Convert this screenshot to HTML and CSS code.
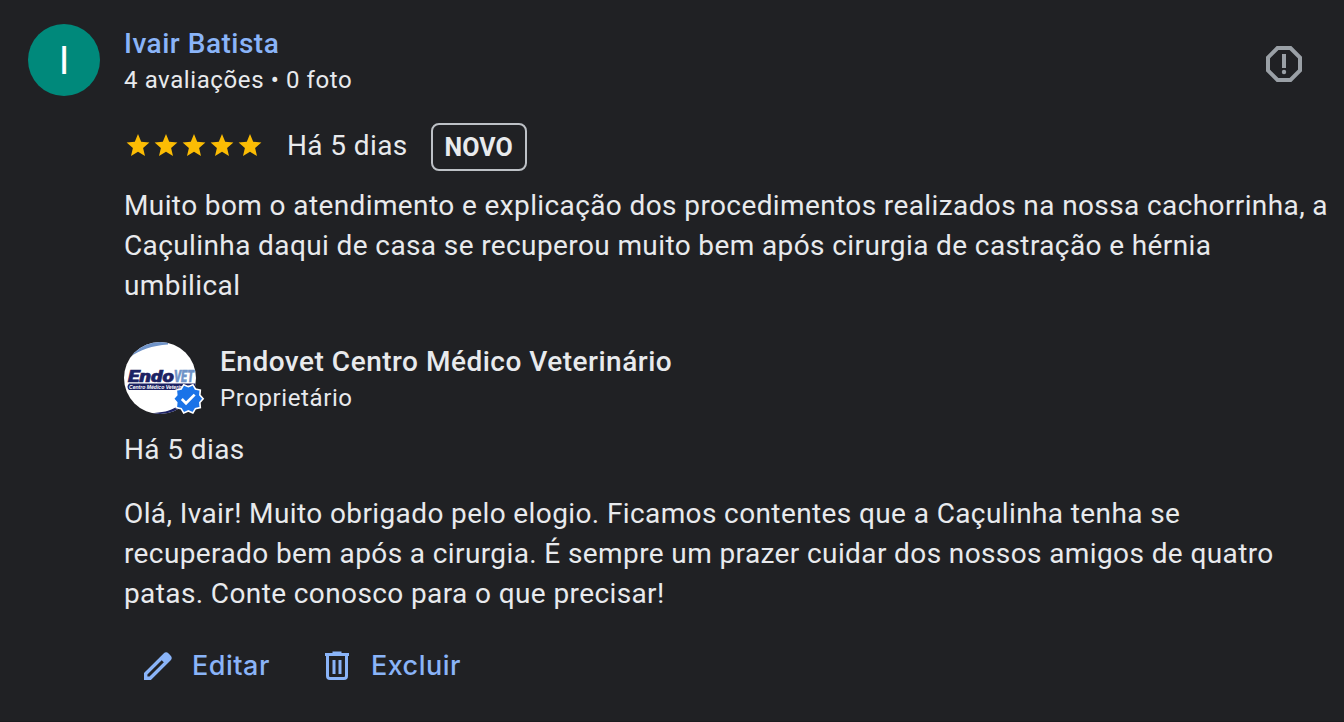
FILE: index.html
```html
<!DOCTYPE html>
<html lang="pt-BR">
<head>
    <meta charset="UTF-8">
    <meta name="viewport" content="width=device-width, initial-scale=1.0">
    <title>Avaliações</title>
    <link rel="stylesheet" href="styles.css">
</head>
<body>

    <div class="review">
        <div class="avatar">I</div>

        <div class="content">
            <!-- Reviewer -->
            <div class="header">
                <div>
                    <a class="name link">Ivair Batista</a>
                    <div class="subtitle">4 avaliações • 0 foto</div>
                </div>
                <svg class="report" viewBox="0 0 36 36">
                    <path d="M11.500 2h13L34 11.500v13L24.500 34h-13L2 24.500v-13z" fill="none" stroke="#9aa0a6" stroke-width="4"/>
                    <path d="M16 8h4v14h-4z" fill="#9aa0a6"/>
                    <circle cx="18" cy="26" r="2.200" fill="#9aa0a6"/>
                </svg>
            </div>

            <!-- Rating -->
            <div class="rating">
                <svg class="stars" viewBox="0 0 140 28">
                    <defs>
                        <path id="star" d="M14 20.700l7 4.300-1.900-8.100 6.300-5.500-8.200-.7L14 3l-3.200 7.700-8.200.7 6.300 5.500L7 25z"/>
                    </defs>
                    <g fill="#fbbc04">
                        <use href="#star"/>
                        <use href="#star" x="28"/>
                        <use href="#star" x="56"/>
                        <use href="#star" x="84"/>
                        <use href="#star" x="112"/>
                    </g>
                </svg>
                <span class="date">Há 5 dias</span>
                <span class="badge">NOVO</span>
            </div>

            <p class="text">Muito bom o atendimento e explicação dos procedimentos realizados na nossa cachorrinha, a Caçulinha daqui de casa se recuperou muito bem após cirurgia de castração e hérnia umbilical</p>

            <!-- Owner reply -->
            <div class="owner">
                <svg class="logo" viewBox="0 0 80 72">
                    <defs>
                        <clipPath id="round"><circle cx="36" cy="36" r="36"/></clipPath>
                    </defs>
                    <g clip-path="url(#round)">
                        <path d="M0 0h72v72H0z" fill="#fff"/>
                        <path d="M6 15C16 8 28 3.500 44 2.500V-2H6z" fill="#6f93c8"/>
                        <path d="M26 71C38 71 46 69 54 64L60 74H26z" fill="#1c2263"/>
                        <text class="logo-name" x="4" y="40" textLength="46" lengthAdjust="spacingAndGlyphs" fill="#1c2263" stroke="#1c2263" stroke-width=".6">Endo</text>
                        <text class="logo-name" x="50" y="40" textLength="20" lengthAdjust="spacingAndGlyphs" fill="#6f93c8" stroke="#6f93c8" stroke-width=".6">VET</text>
                        <path d="M5 41.500h67v6.500H5q-3-3.200 0-6.500z" fill="#1c2263"/>
                        <text class="logo-tag" x="5" y="46.700" textLength="63" lengthAdjust="spacingAndGlyphs" fill="#fff">Centro Médico Veterinário</text>
                    </g>
                    <g transform="translate(48.100 40.600) scale(1.350)">
                        <path d="M23 12l-2.440-2.780.34-3.680-3.610-.82-1.890-3.180L12 3 8.600 1.540 6.710 4.720l-3.610.81.34 3.680L1 12l2.440 2.780-.34 3.690 3.610.82 1.890 3.180L12 21l3.400 1.460 1.890-3.180 3.610-.82-.34-3.680L23 12z" fill="#1a73e8" stroke="#fff" stroke-width="1.200"/>
                        <path d="M7.200 12.200l3.100 3.100 6.400-6.400" fill="none" stroke="#fff" stroke-width="2"/>
                    </g>
                </svg>
                <div>
                    <div class="name">Endovet Centro Médico Veterinário</div>
                    <div class="subtitle">Proprietário</div>
                </div>
            </div>
            <div class="date">Há 5 dias</div>
            <p class="text reply">Olá, Ivair! Muito obrigado pelo elogio. Ficamos contentes que a Caçulinha tenha se recuperado bem após a cirurgia. É sempre um prazer cuidar dos nossos amigos de quatro patas. Conte conosco para o que precisar!</p>

            <div class="actions">
                <button>
                    <svg class="icon" viewBox="0 0 36 36">
                        <path d="M5.700 30.300v-4.500L24.800 6.700q1.300-1.300 2.600 0l1.900 1.900q1.300 1.300 0 2.600L10.200 30.300z" fill="none" stroke="#8ab4f8" stroke-width="3.400"/>
                        <path d="M20 10.500l5-5 5.500 5.500-5 5z" fill="#8ab4f8"/>
                    </svg>
                    Editar
                </button>
                <button>
                    <svg class="icon" viewBox="0 0 36 36" fill="none" stroke="#8ab4f8">
                        <path d="M6 6.500h24M13.500 5h9" stroke-width="3"/>
                        <path d="M8.500 8v20q0 2.500 2.500 2.500h14q2.500 0 2.500-2.500V8" stroke-width="3"/>
                        <path d="M15 12v14M21 12v14" stroke-width="3"/>
                    </svg>
                    Excluir
                </button>
            </div>
        </div>
    </div>

</body>
</html>
```
FILE: styles.css
```css
body {
    font-family: Roboto, sans-serif;
    background-color: #202124;
    color: #e8eaed;
    margin: 0;
}

.review {
    display: flex;
    gap: 24px;
    box-sizing: border-box;
    height: 722px;
    padding: 24px 14px 0 28px;
    border-bottom: 1px solid #1b1c1f;
}

.avatar {
    flex: none;
    box-sizing: border-box;
    width: 72px;
    height: 72px;
    padding-top: 1px;
    border-radius: 50%;
    background: #00897b;
    color: white;
    font-size: 39px;
    line-height: 72px;
    text-align: center;
}

.content {
    flex: 1;
}

.header {
    display: flex;
    justify-content: space-between;
}

.name {
    display: block;
    font-size: 28px;
    font-weight: 500;
    line-height: 40px;
    letter-spacing: 0.5px;
}

.link {
    color: #8ab4f8;
}

.subtitle {
    font-size: 24px;
    line-height: 32px;
    letter-spacing: 0.6px;
}

.report {
    width: 36px;
    height: 36px;
    margin: 22px 28px 0 0;
}

.rating {
    display: flex;
    align-items: center;
    height: 48px;
    margin-top: 27px;
}

.stars {
    width: 140px;
    height: 28px;
    margin: 0 23px 5px 0;
}

.date, .text {
    font-size: 28px;
    line-height: 40px;
    letter-spacing: 0.39px;
}

.rating .date {
    margin-bottom: 2px;
}

.badge {
    box-sizing: border-box;
    width: 96px;
    height: 48px;
    margin-left: 23px;
    border: 2px solid #bdc1c6;
    border-radius: 8px;
    font-size: 25px;
    font-weight: 700;
    line-height: 46px;
    text-align: center;
}

.text {
    margin: 15px 0 36px;
}

.owner {
    display: flex;
    gap: 16px;
    margin-bottom: 16px;
}

.logo {
    width: 80px;
    height: 72px;
    overflow: visible;
}

.logo-name {
    font: italic 900 17px Roboto, sans-serif;
}

.logo-tag {
    font: italic 700 5.5px "Liberation Sans", sans-serif;
}

.reply {
    margin: 24px 0 32px;
}

.actions {
    display: flex;
    gap: 49px;
    padding-left: 16px;
}

button {
    display: flex;
    align-items: center;
    gap: 16px;
    padding: 0;
    border: none;
    background: none;
    color: #8ab4f8;
    font: 500 27px/40px Inter, sans-serif;
    letter-spacing: 0.5px;
    cursor: pointer;
}

.icon {
    width: 36px;
    height: 36px;
}
```
